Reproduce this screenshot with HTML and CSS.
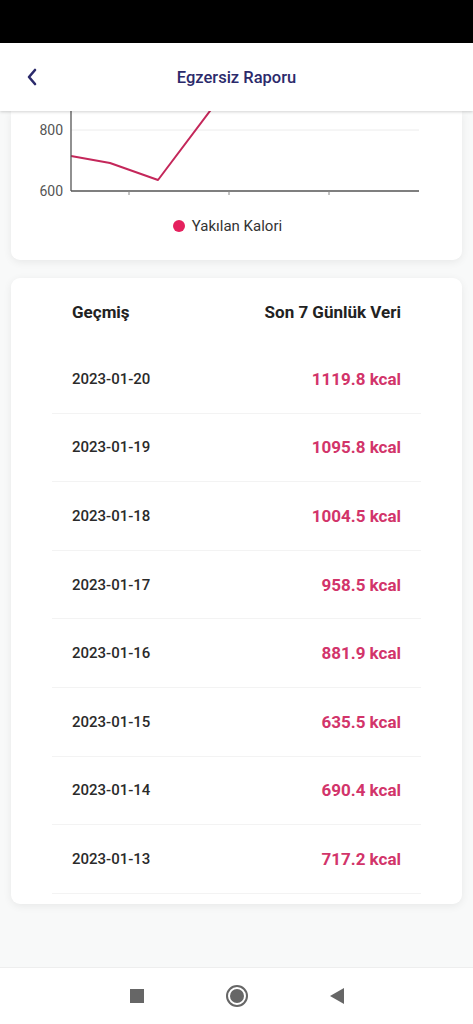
FILE: index.html
```html
<!DOCTYPE html>
<html lang="tr">

<head>
    <meta charset="UTF-8">
    <meta name="viewport" content="width=device-width, initial-scale=1.0">
    <title>Egzersiz Raporu</title>
    <link rel="stylesheet" href="styles.css">
</head>

<body>
    <div class="status-bar"></div>

    <header class="top-bar">
        <button class="back-btn" aria-label="Geri">
            <svg width="14" height="18" viewBox="0 0 14 18">
                <path d="M10 2 L4 9 L10 16" fill="none" stroke="#2b2a6b" stroke-width="2.6" stroke-linecap="round" stroke-linejoin="round" />
            </svg>
        </button>
        <h1 class="top-title">Egzersiz Raporu</h1>
    </header>

    <main class="content">
        <!-- grafik kartı (yukarı kaydırılmış) -->
        <section class="card chart-card">
            <svg class="chart" width="451" height="90" viewBox="0 0 451 90">
                <line x1="60" y1="19" x2="408" y2="19" stroke="#ececec" stroke-width="1" />
                <polyline points="60,45 99,52 147,69 205,-8" fill="none" stroke="#c4275a" stroke-width="2" stroke-linejoin="round" />
                <line x1="60" y1="0" x2="60" y2="80" stroke="#555" stroke-width="1.3" />
                <line x1="60" y1="80" x2="408" y2="80" stroke="#555" stroke-width="1.3" />
                <line x1="118" y1="80" x2="118" y2="84" stroke="#888" stroke-width="1" />
                <line x1="218" y1="80" x2="218" y2="84" stroke="#888" stroke-width="1" />
                <line x1="318" y1="80" x2="318" y2="84" stroke="#888" stroke-width="1" />
                <text class="axis-label" x="52" y="24" text-anchor="end">800</text>
                <text class="axis-label" x="52" y="85" text-anchor="end">600</text>
            </svg>
            <div class="legend">
                <span class="legend-dot"></span>
                <span class="legend-text">Yakılan Kalori</span>
            </div>
        </section>

        <section class="card history-card">
            <div class="history-row history-head">
                <span>Geçmiş</span>
                <span>Son 7 Günlük Veri</span>
            </div>
            <div class="history-row">
                <span class="date">2023-01-20</span>
                <span class="kcal">1119.8 kcal</span>
            </div>
            <div class="history-row">
                <span class="date">2023-01-19</span>
                <span class="kcal">1095.8 kcal</span>
            </div>
            <div class="history-row">
                <span class="date">2023-01-18</span>
                <span class="kcal">1004.5 kcal</span>
            </div>
            <div class="history-row">
                <span class="date">2023-01-17</span>
                <span class="kcal">958.5 kcal</span>
            </div>
            <div class="history-row">
                <span class="date">2023-01-16</span>
                <span class="kcal">881.9 kcal</span>
            </div>
            <div class="history-row">
                <span class="date">2023-01-15</span>
                <span class="kcal">635.5 kcal</span>
            </div>
            <div class="history-row">
                <span class="date">2023-01-14</span>
                <span class="kcal">690.4 kcal</span>
            </div>
            <div class="history-row">
                <span class="date">2023-01-13</span>
                <span class="kcal">717.2 kcal</span>
            </div>
        </section>
    </main>

    <nav class="nav-bar">
        <span class="nav-square"></span>
        <span class="nav-home"><span class="nav-home-inner"></span></span>
        <span class="nav-back"></span>
    </nav>
</body>

</html>
```

FILE: styles.css
```css
* {
    box-sizing: border-box;
}

body {
    margin: 0;
    height: 1024px;
    display: flex;
    flex-direction: column;
    background-color: #f8f9f9;
    font-family: Roboto, "Noto Sans", sans-serif;
    overflow: hidden;
}

.status-bar {
    height: 43px;
    background-color: #000;
}

.top-bar {
    position: relative;
    z-index: 2;
    height: 68px;
    display: flex;
    align-items: center;
    justify-content: center;
    background-color: #fff;
    box-shadow: 0 1px 3px rgba(0, 0, 0, 0.18);
}

.back-btn {
    position: absolute;
    left: 25px;
    top: 25px;
    padding: 0;
    border: none;
    background: none;
    display: flex;
}

.top-title {
    margin: 0;
    font-size: 16.5px;
    font-weight: 500;
    color: #2b2a6b;
}

.content {
    flex: 1;
    padding: 0 11px;
    overflow: hidden;
}

.card {
    background-color: #fff;
    border-radius: 9px;
    box-shadow: 0 2px 8px rgba(0, 0, 0, 0.07);
}

.chart-card {
    border-radius: 0 0 9px 9px;
    padding-bottom: 24px;
}

.chart {
    display: block;
}

.axis-label {
    font-family: Roboto, sans-serif;
    font-size: 14px;
    fill: #555;
}

.legend {
    margin-top: 15px;
    height: 20px;
    display: flex;
    align-items: center;
    justify-content: center;
    gap: 7px;
    padding-right: 18px;
}

.legend-dot {
    width: 12px;
    height: 12px;
    border-radius: 50%;
    background-color: #e5215e;
}

.legend-text {
    font-size: 15px;
    color: #333;
}

.history-card {
    margin-top: 18px;
    padding: 0 41px 10px;
}

.history-row {
    height: 68.6px;
    display: flex;
    align-items: center;
    justify-content: space-between;
    padding: 0 20px;
    border-bottom: 1px solid #f3f3f3;
}

.history-head {
    height: 67px;
    border-bottom: none;
    font-size: 17px;
    font-weight: 700;
    color: #222;
}

.date {
    font-size: 15px;
    font-weight: 500;
    color: #2a2a2a;
}

.kcal {
    font-size: 17px;
    font-weight: 700;
    color: #d2346a;
}

.nav-bar {
    height: 57px;
    display: flex;
    align-items: center;
    justify-content: center;
    gap: 82px;
    background-color: #fff;
    border-top: 1px solid #eee;
}

.nav-square {
    width: 14px;
    height: 14px;
    background-color: #666;
}

.nav-home {
    width: 22px;
    height: 22px;
    border-radius: 50%;
    border: 2px solid #666;
    display: flex;
    align-items: center;
    justify-content: center;
}

.nav-home-inner {
    width: 14px;
    height: 14px;
    border-radius: 50%;
    background-color: #666;
}

.nav-back {
    width: 0;
    height: 0;
    border-top: 8px solid transparent;
    border-bottom: 8px solid transparent;
    border-right: 14px solid #666;
}
```
